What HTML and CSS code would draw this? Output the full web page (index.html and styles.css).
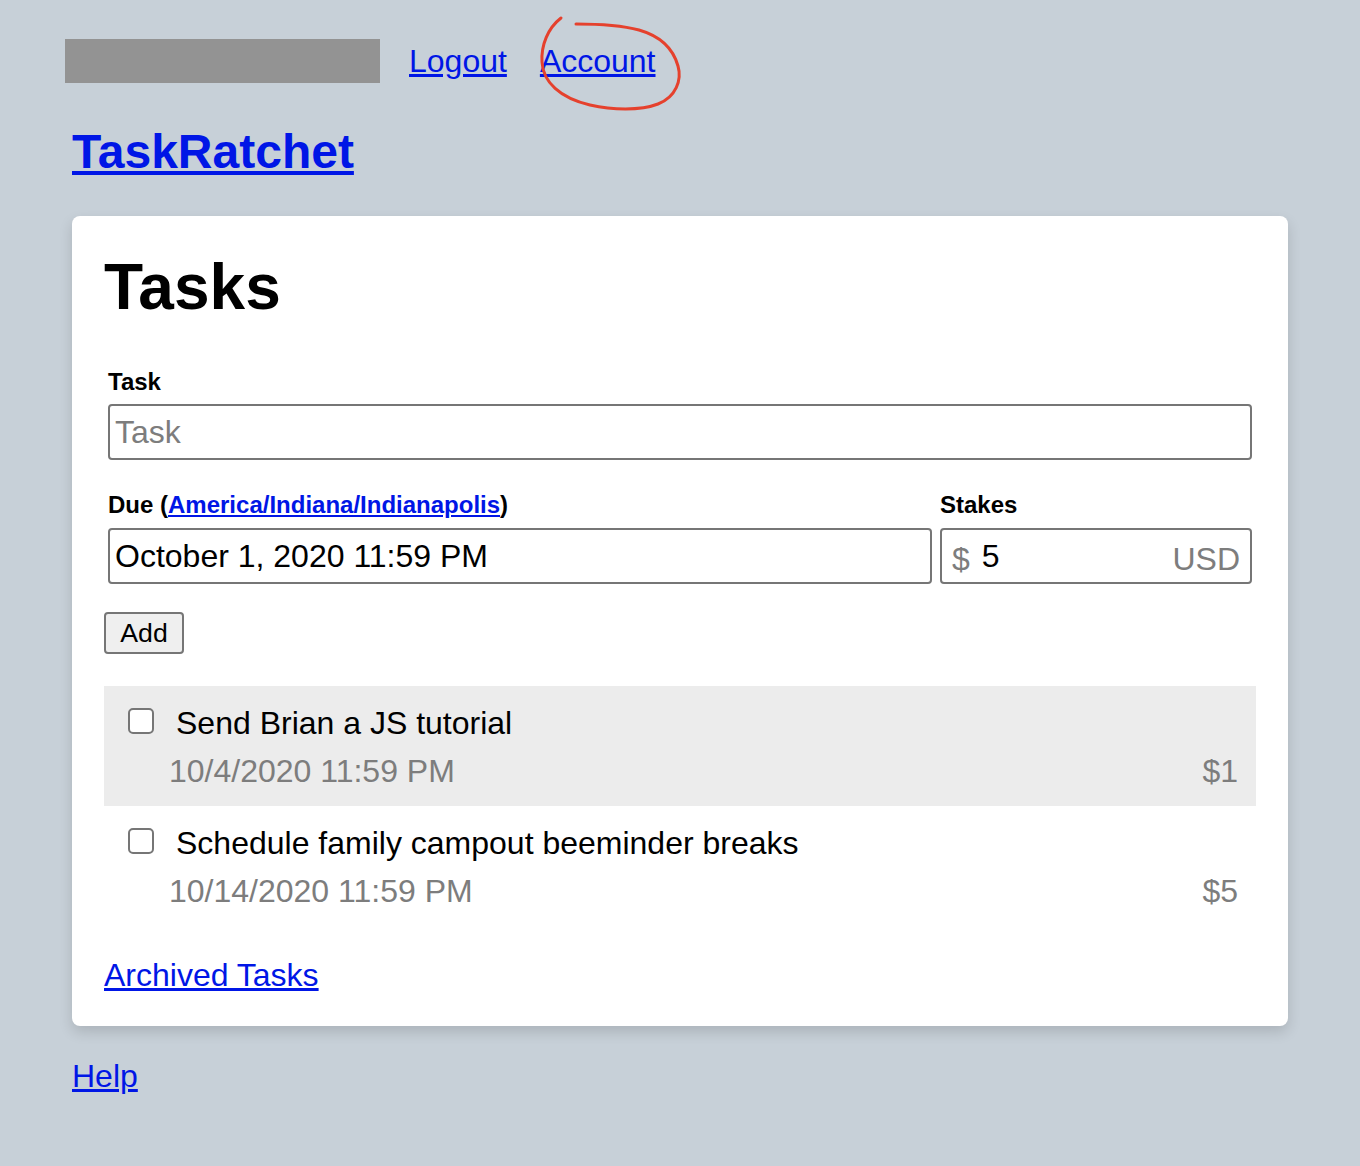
FILE: index.html
```html
<!DOCTYPE html>
<html lang="en">
<head>
<meta charset="utf-8">
<title>TaskRatchet</title>
<link rel="stylesheet" href="styles.css">
</head>
<body>
<div class="page">
  <header class="topnav">
    <span class="redacted"></span>
    <a href="#" class="navlink">Logout</a>
    <a href="#" class="navlink">Account</a>
  </header>
  <div class="brand"><a href="#">TaskRatchet</a></div>

  <main class="card">
    <h1 class="title">Tasks</h1>
    <form class="form">
      <label class="label" for="task">Task</label>
      <input class="field" id="task" type="text" placeholder="Task">
      <div class="due-row">
        <div class="col">
          <label class="label" for="due">Due (<a href="#">America/Indiana/Indianapolis</a>)</label>
          <input class="field" id="due" type="text" value="October 1, 2020 11:59 PM">
        </div>
        <div class="col">
          <label class="label" for="stakes">Stakes</label>
          <div class="stakes">
            <span class="affix">$</span>
            <input class="stakes-input" id="stakes" type="text" value="5">
            <span class="affix usd">USD</span>
          </div>
        </div>
      </div>
      <button class="btn" type="button">Add</button>
    </form>

    <ul class="tasks">
      <li class="task hl">
        <div class="task-top">
          <input class="check" type="checkbox">
          <span class="task-name">Send Brian a JS tutorial</span>
        </div>
        <div class="task-meta">
          <span>10/4/2020 11:59 PM</span>
          <span>$1</span>
        </div>
      </li>
      <li class="task">
        <div class="task-top">
          <input class="check" type="checkbox">
          <span class="task-name">Schedule family campout beeminder breaks</span>
        </div>
        <div class="task-meta">
          <span>10/14/2020 11:59 PM</span>
          <span>$5</span>
        </div>
      </li>
    </ul>

    <a href="#" class="archived">Archived Tasks</a>
  </main>

  <footer class="footer"><a href="#">Help</a></footer>
</div>

<svg class="annotation" width="1360" height="130" viewBox="0 0 1360 130" aria-hidden="true">
  <path d="M561,18 C548,28 541,45 542,62 C543,82 560,98 590,105 C612,110 640,111 658,104 C676,97 682,80 678,66 C673,48 660,36 639,30 C620,25 598,24 576,24" fill="none" stroke="#e5412d" stroke-width="3" stroke-linecap="round"/>
</svg>
</body>
</html>
```

FILE: styles.css
```css
* { box-sizing: border-box; }

html, body {
  margin: 0;
  padding: 0;
  background: #c7d0d8;
  font-family: "Liberation Sans", Arial, Helvetica, sans-serif;
  color: #000;
}

a { color: #0016e6; }

.page {
  padding: 39px 72px 60px;
}

.topnav {
  display: flex;
  align-items: center;
  height: 44px;
  margin-left: -7px;
}

.redacted {
  display: block;
  width: 315px;
  height: 44px;
  background: #939393;
  margin-right: 29px;
}

.navlink {
  font-size: 32px;
  line-height: 44px;
  margin-right: 33px;
}

.brand {
  margin-top: 41px;
  font-size: 48px;
  font-weight: bold;
  line-height: 56px;
}

.card {
  margin-top: 36px;
  background: #fff;
  border-radius: 8px;
  box-shadow: 0 6px 14px rgba(0, 0, 0, 0.14);
  padding: 34px 32px 32px;
}

.title {
  margin: 0;
  font-size: 64px;
  line-height: 74px;
  font-weight: bold;
}

.form {
  margin-top: 44px;
  padding: 0;
}

.label {
  display: block;
  margin: 0 4px 8px;
  font-size: 24px;
  line-height: 28px;
  font-weight: bold;
}

.field {
  display: block;
  width: calc(100% - 8px);
  margin: 0 4px;
  height: 56px;
  border: 2px solid #767676;
  border-radius: 4px;
  padding: 0 5px;
  font-family: "Liberation Sans", Arial, sans-serif;
  font-size: 32px;
  color: #000;
  background: #fff;
}

.field::placeholder { color: #7d7d7d; }

.due-row {
  display: grid;
  grid-template-columns: 1fr 312px;
  column-gap: 8px;
  margin: 31px 4px 0;
}

.due-row .label { margin-left: 0; margin-right: 0; margin-bottom: 9px; }
.due-row .field { width: 100%; margin: 0; }

.stakes {
  display: flex;
  align-items: center;
  height: 56px;
  border: 2px solid #767676;
  border-radius: 4px;
  padding: 0 10px 0 10px;
  background: #fff;
}

.affix {
  font-size: 32px;
  color: #7d7d7d;
  position: relative;
  top: 3px;
}

.stakes-input {
  flex: 1;
  min-width: 0;
  border: none;
  outline: none;
  padding: 0 0 0 12px;
  font-family: "Liberation Sans", Arial, sans-serif;
  font-size: 32px;
  color: #000;
  background: transparent;
}

.btn {
  display: block;
  margin-top: 28px;
  height: 42px;
  width: 80px;
  padding: 3px 0;
  border: 2px solid #767676;
  border-radius: 4px;
  background: #efefef;
  font-family: "Liberation Sans", Arial, sans-serif;
  font-size: 26.67px;
  line-height: 32px;
  color: #000;
}

.tasks {
  list-style: none;
  margin: 32px 0 0;
  padding: 0;
}

.task {
  height: 120px;
  padding: 19px 18px 16px 24px;
}

.task.hl { background: #ececec; }

.task-top {
  display: flex;
  align-items: flex-start;
}

.check {
  appearance: none;
  -webkit-appearance: none;
  width: 26px;
  height: 26px;
  margin: 3px 0 0;
  border: 2px solid #767676;
  border-radius: 5px;
  background: #fff;
  flex: none;
}

.task-name {
  margin-left: 22px;
  font-size: 32px;
  line-height: 37px;
}

.task-meta {
  display: flex;
  justify-content: space-between;
  margin-top: 11px;
  padding-left: 41px;
  font-size: 32px;
  line-height: 37px;
  color: #7d7d7d;
}

.archived {
  display: inline-block;
  margin-top: 31px;
  font-size: 32px;
  line-height: 37px;
}

.footer {
  margin-top: 32px;
  font-size: 32px;
  line-height: 37px;
}

.annotation {
  position: absolute;
  left: 0;
  top: 0;
  pointer-events: none;
}
```
